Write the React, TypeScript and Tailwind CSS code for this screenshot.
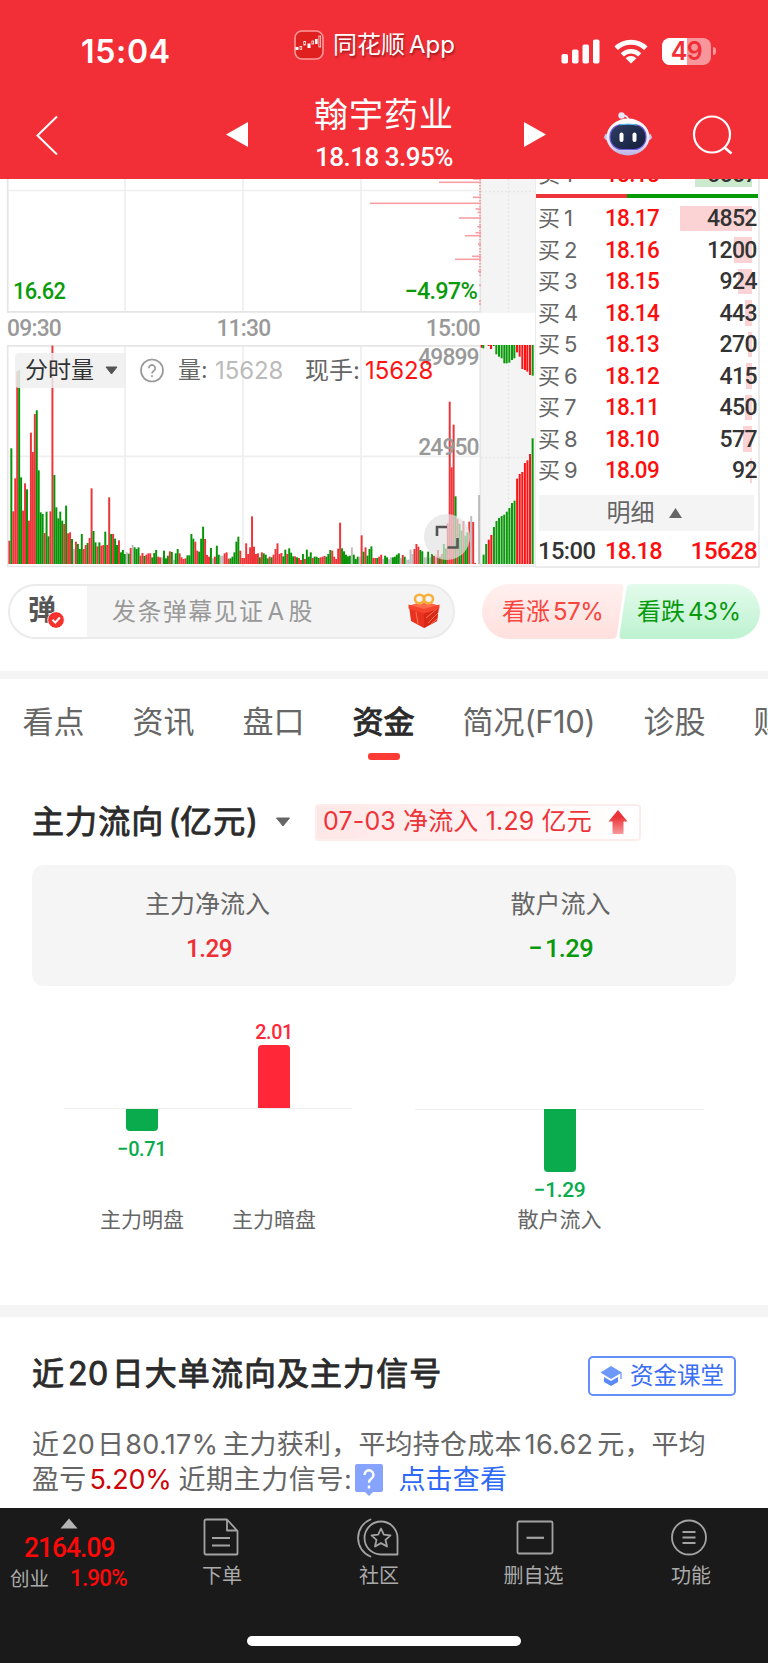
import React from 'react';

const CJK = "font-['Inter','Noto_Sans_CJK_SC',sans-serif]";
const NUM = "font-['Roboto','Noto_Sans_CJK_SC',sans-serif]";

/* One minute of turnover per entry: r = rise, g = fall, n = unchanged. */
const VOLUME =
  'r70 g347 r158 r257 r578 g582 g260 r160 r242 g224 r130 r394 r336 r450 g461 g281 g155 g150 r93 g157 g83 r158 r655 g267 g170 g137 g157 g130 r120 g175 r92 r95 g75 n45 r67 g60 g45 g90 r45 r57 g63 r78 r227 g99 g65 r53 g65 r55 r57 g97 r57 r200 g90 r90 g76 g57 r71 g35 g42 g30 n35 g31 r48 n57 g50 g45 g50 r25 r33 g24 r28 r32 r32 g20 g33 g42 r22 r20 n20 g40 g17 g25 r38 g36 n13 g32 g45 r32 r20 r15 r17 g26 g26 g90 g76 r67 r40 g37 g76 g112 r75 r27 r22 g48 n17 r22 g55 g28 n25 n25 r32 r35 r16 g17 g22 g35 g67 g82 r40 r18 r18 r62 r30 r50 r143 r52 r30 r32 g20 r35 g32 g28 g17 r22 g20 r28 r45 r62 r30 r33 g23 g43 r30 g47 g34 g23 r23 g20 r18 r12 g30 r15 g43 g22 g35 r18 g22 g22 g18 r20 r22 r24 g22 g30 g42 r40 r22 r15 r46 r124 g47 g38 g28 g23 g25 n50 g28 g15 g22 n22 r86 g37 r50 g25 g45 g53 r18 r18 g18 r22 r28 n15 g25 g20 n14 n20 g20 g22 g28 g32 n18 r27 g22 n13 n13 n43 n30 r45 r60 r52 g42 g38 n20 n20 g37 n20 g30 r25 n28 r42 g22 r30 g60 g47 r122 r487 r290 r418 g203 r135 g120 g100 r128 g85 g95 r127 n144 r126 r3 n0 n207'.split(
    ' ',
  );
const AUCTION_TOP = 'r8 g10 r3 r12 g3 g28 g35 g40 g55 g55 g53 g45 g40 r22 r35 r72 r75 r80 r90 g92'.split(' ');
const AUCTION_TOP_X = [635, 640, 656, 663, 671, 679, 687, 695, 703, 710, 718, 726, 733, 741, 749, 757, 765, 772, 780, 788];
const AUCTION_BOTTOM =
  'g28 g60 r73 r87 g111 g129 g138 g144 g148 g157 g168 g183 g190 r256 r270 r276 r303 r311 r330 g377'.split(' ');

const TONE: Record<string, string> = { r: '#ec3439', g: '#069306', n: '#bdbdbd' };
const TONE2: Record<string, string> = { r: '#fb1214', g: '#0a990a' };

const PINK: [number, number][] = [
  [0, 473], [3.3, 439], [18.3, 473], [24.3, 370], [30, 475.5], [33.3, 477.5], [39, 459], [47.7, 477.3], [53.7, 475.5],
  [56.7, 465], [65.3, 478], [77.3, 472], [80.3, 455], [92.3, 478], [106.3, 479], [122, 479], [125, 479],
];

function PricePane() {
  return (
    <div className="relative h-[134px]">
      <svg width="536" height="134" viewBox="0 0 536 134" className="block">
        <rect x="481" y="0" width="54" height="134" fill="#f4f4f4" />
        <path d="M508.500 0V133M481 12.500H534" stroke="#e6e6e6" strokeWidth="1.500" strokeDasharray="2 2" fill="none" />
        <path d="M125 0V133M243 0V133M361 0V133M8 11.500H480" stroke="#efefef" strokeWidth="1.700" fill="none" />
        <path d="M7.700 0V133M480.300 0V133M7 132.800H481" stroke="#e4e4e4" strokeWidth="1.700" fill="none" />
        <path d="M480 0V97" stroke="#f7a3a5" strokeWidth="2" strokeDasharray="1.600 1.400" />
        {PINK.map(([y, x]) => (
          <rect key={y} x={x} y={y - 0.8} width={481 - x} height="1.600" fill="#f7a0a3" />
        ))}
      </svg>
      <div className={`absolute top-[98px] left-0 flex h-[29px] w-[477px] justify-between pl-[13px] text-[24px] leading-[29px] font-medium tracking-[-0.8px] text-[#0a9b0a] ${NUM}`}>
        <span className="inline-block origin-left scale-x-[0.91]">16.62</span>
        <span className="inline-block origin-right scale-x-[0.98]">−4.97%</span>
      </div>
    </div>
  );
}

function VolumePane() {
  return (
    <div className="relative h-[223px]">
      <svg width="536" height="223" viewBox="0 0 536 223" className="block">
        <rect x="481" y="0" width="54" height="222" fill="#f4f4f4" />
        <path d="M508.500 0V222M481 112.500H534" stroke="#e6e6e6" strokeWidth="1.500" strokeDasharray="2 2" fill="none" />
        <path d="M125 0V222M243 0V222M361 0V222M8 111.300H480" stroke="#efefef" strokeWidth="1.700" fill="none" />
        <path d="M7.700 0V222M480.300 0V222M7 0.800H481M7 221.500H536" stroke="#e6e6e6" strokeWidth="1.700" fill="none" />
        {VOLUME.map((v, i) => {
          const h = Number(v.slice(1)) / 3;
          return <rect key={i} x={8.4 + i * 1.957} y={219 - h} width="1.957" height={h} fill={TONE[v[0]]} />;
        })}
        {AUCTION_TOP.map((v, i) => (
          <rect key={i} x={270 + AUCTION_TOP_X[i] / 3 - 1} y="0" width="2" height={Number(v.slice(1)) / 3} fill={TONE2[v[0]]} />
        ))}
        {AUCTION_BOTTOM.map((v, i) => (
          <rect key={i} x={482.6 + i * 2.58} y={219 - Number(v.slice(1)) / 3} width="2" height={Number(v.slice(1)) / 3} fill={TONE2[v[0]]} />
        ))}
      </svg>
      <div className={`absolute top-[-2px] right-[56px] flex origin-right scale-x-[0.95] flex-col gap-[61px] text-right text-[24px] leading-[29px] font-medium tracking-[-0.9px] text-[#999] ${NUM}`}>
        <span>49899</span>
        <span>24950</span>
      </div>
      <div className={`absolute top-[8px] left-[15px] flex h-[35px] items-center text-[23px] leading-[35px] ${CJK}`}>
        <div className="flex h-[35px] w-[111px] items-center rounded bg-[#eeeeee]/85 pl-[10px] text-[#333]">
          <span className="w-[80px]">分时量</span>
          <svg width="14" height="9" viewBox="0 0 14 9"><path d="M1 1H12L6.500 8Z" fill="#555" stroke="#555" strokeLinejoin="round" /></svg>
        </div>
        <svg width="26" height="26" viewBox="0 0 26 26" fill="none" stroke="#999" strokeWidth="1.700" className="ml-[13px]">
          <circle cx="13" cy="12.500" r="11" />
          <path d="M9.800 10.200a3.200 3.200 0 1 1 4.900 2.700c-1.100.8-1.700 1.200-1.700 2.700" />
          <path d="M13 17.200v1.900" />
        </svg>
        <span className="ml-[13px] w-[37px] text-[#666]">量:</span>
        <span className="w-[90px] text-[24px] tracking-[-0.1px] text-[#bbb]">15628</span>
        <span className="w-[60px] text-[24px] text-[#666]">现手:</span>
        <span className="text-[24px] tracking-[-0.1px] text-[#ff1414]">15628</span>
      </div>
      <div className="absolute top-[169px] left-[424px] flex size-[46px] items-center justify-center rounded-full bg-[#e2e2e2]/70">
        <svg width="24" height="24" viewBox="0 0 24 24" fill="none" stroke="#555" strokeWidth="2.600">
          <path d="M2 11V2H12M12.500 22.500H22.500V13" />
        </svg>
      </div>
    </div>
  );
}

const BIDS: [string, string, string, number][] = [
  ['1', '18.17', '4852', 72],
  ['2', '18.16', '1200', 18],
  ['3', '18.15', '924', 14],
  ['4', '18.14', '443', 7],
  ['5', '18.13', '270', 4],
  ['6', '18.12', '415', 6],
  ['7', '18.11', '450', 7],
  ['8', '18.10', '577', 9],
  ['9', '18.09', '92', 2],
];

function BookRow({ side, level, price, qty, bar, tint }: { side: string; level: string; price: string; qty: string; bar: number; tint: string }) {
  return (
    <div className={`relative flex h-[31.500px] shrink-0 items-center pr-[1px] pl-[2px] text-[24px] leading-[31px] font-medium tracking-[-0.7px] ${NUM}`}>
      <div className={`absolute top-[2.500px] right-[6px] h-[25.500px] ${tint}`} style={{ width: bar }} />
      <span className={`relative w-[67px] text-[22px] font-normal tracking-normal whitespace-pre text-[#666] ${CJK}`}>
        {side}
        <span className="pl-[4px]">{level}</span>
      </span>
      <span className="relative flex-1 text-[#fe0d0d]"><span className="inline-block origin-left scale-x-[0.935]">{price}</span></span>
      <span className="relative origin-right scale-x-[0.96] text-[#333]">{qty}</span>
    </div>
  );
}

function OrderBook() {
  return (
    <div className="flex h-[389px] w-[225px] flex-col overflow-hidden border-r-2 border-b-2 border-l border-[#ebebeb]">
      <div className="flex h-[15px] shrink-0 flex-col justify-end overflow-hidden pb-[4px]">
        <BookRow side="卖" level="1" price="18.18" qty="5557" bar={57} tint="bg-[#cbe9cc]" />
      </div>
      <div className="flex h-[4px] shrink-0">
        <div className="w-[91px] bg-[#ec3439]" />
        <div className="flex-1 bg-[#069b06]" />
      </div>
      <div className="mt-[5px]">
        {BIDS.map(([l, p, q, b]) => (
          <BookRow key={l} side="买" level={l} price={p} qty={q} bar={b} tint="bg-[#fbd3d5]" />
        ))}
      </div>
      <div className={`mt-[8px] mr-[4px] ml-[3px] flex h-[36px] shrink-0 items-center justify-center gap-[13px] bg-[#f4f4f4] pr-[4px] text-[24px] leading-[36px] text-[#666] ${CJK}`}>
        <span>明细</span>
        <svg width="15" height="12" viewBox="0 0 15 12"><path d="M7.500 1L14 11H1Z" fill="#666" /></svg>
      </div>
      <div className={`mt-[4px] flex h-[31px] items-center pr-[1px] pl-[2px] text-[24.500px] leading-[31px] font-medium tracking-[-0.6px] text-[#fe0d0d] ${NUM}`}>
        <span className="w-[67px] text-[#333]"><span className="inline-block origin-left scale-x-[0.97]">15:00</span></span>
        <span className="flex-1"><span className="inline-block origin-left scale-x-[0.96]">18.18</span></span>
        <span>15628</span>
      </div>
    </div>
  );
}

function Header() {
  return (
    <header className={`flex h-[179px] shrink-0 flex-col bg-[#f22f37] text-white ${CJK}`}>
      <div className="flex h-[84px] pl-[81px]">
        <span className="mt-[32px] w-[213px] text-[32px] leading-[40px] font-semibold tracking-[0.7px]">15:04</span>
        <svg width="30" height="30" viewBox="0 0 30 30" fill="none" className="mt-[29.500px]">
          <rect x="1" y="1" width="28" height="28" rx="7" fill="#e0201f" stroke="#ff9a9c" strokeWidth="1.600" />
          <g fill="#fff"><rect x="1.500" y="17" width="3" height="3" /><rect x="13.500" y="13.500" width="3" height="4.500" /><rect x="21" y="9" width="2.600" height="5" /></g>
          <g stroke="#fff" strokeWidth="0.700"><rect x="6" y="16.500" width="1.800" height="3" /><rect x="9.800" y="11.500" width="1.800" height="3.500" /><rect x="17.900" y="11" width="1.800" height="3" /><rect x="24.900" y="6" width="1.800" height="11" /></g>
        </svg>
        <span className="mt-[27px] ml-[9px] w-[228px] text-[24px] leading-[36px] [text-shadow:1px_2px_2px_rgba(60,0,0,0.45)]">
          同花顺<span className="pl-[4px]">App</span>
        </span>
        <svg width="40" height="25" viewBox="0 0 40 25" fill="#fff" className="mt-[38.500px]">
          <rect x="0.500" y="15" width="6.500" height="9.500" rx="1.800" /><rect x="11" y="10.500" width="6.500" height="14" rx="1.800" /><rect x="21.500" y="5.500" width="6.500" height="19" rx="1.800" /><rect x="32" y="0.500" width="6.500" height="24" rx="1.800" />
        </svg>
        <svg width="34" height="25" viewBox="0 0 34 25" className="mt-[38.500px] ml-[13px]">
          <g fill="none" stroke="#fff" strokeWidth="5"><path d="M2.200 9.300a21 21 0 0 1 29.600 0" /><path d="M8.300 15.800a12.400 12.400 0 0 1 17.400 0" strokeWidth="4.600" /></g>
          <path d="M17 24.500L11.600 19.200a7.600 7.600 0 0 1 10.800 0Z" fill="#fff" />
        </svg>
        <div className="relative mt-[37.500px] ml-[14px] flex h-[27px] w-[49px] items-center justify-center rounded-[8px] bg-[#f8979b]">
          <div className="absolute inset-y-0 left-0 w-[24.500px] rounded-l-[8px] bg-white" />
          <span className="relative text-[25px] leading-[27px] font-semibold tracking-[-0.5px] text-[#f22f37]">49</span>
        </div>
        <div className="mt-[47px] ml-[2px] h-[8px] w-[3px] rounded-r-full bg-[#f8979b]" />
      </div>
      <div className="flex h-[95px] pl-[35px]">
        <svg width="24" height="40" viewBox="0 0 24 40" fill="none" stroke="#fff" strokeWidth="2" className="mt-[31px]"><path d="M22 1.500L2.500 20.500L22 39.500" /></svg>
        <svg width="24" height="27" viewBox="0 0 24 27" fill="#fff" className="mt-[37px] ml-[166px]"><path d="M1 13.500L23 1V26Z" /></svg>
        <div className="flex w-[274px] flex-col items-center pt-[7px] pr-[4px]">
          <span className="text-[34px] leading-[48px] tracking-[1px]">翰宇药业</span>
          <span className={`mt-[2px] text-[26px] leading-[32px] font-medium tracking-[-0.5px] ${NUM}`}>18.18 3.95%</span>
        </div>
        <svg width="24" height="27" viewBox="0 0 24 27" fill="#fff" className="mt-[37px]"><path d="M1 1L23 13.500L1 26Z" /></svg>
        <svg width="50" height="46" viewBox="0 0 50 46" className="mt-[27px] ml-[56px]">
          <defs>
            <linearGradient id="shell" x1="0" y1="0" x2="0" y2="1"><stop offset="0" stopColor="#fff" /><stop offset="0.650" stopColor="#e6e3f6" /><stop offset="1" stopColor="#b9b2e4" /></linearGradient>
            <linearGradient id="visor" x1="0" y1="0" x2="1" y2="1"><stop offset="0" stopColor="#2e3f63" /><stop offset="1" stopColor="#141d3c" /></linearGradient>
          </defs>
          <path d="M18 4.500q7-1 8 6" fill="none" stroke="#e8e4f5" strokeWidth="1.800" />
          <circle cx="18.500" cy="4.500" r="3.200" fill="#e9e6f7" />
          <ellipse cx="25" cy="26" rx="24" ry="7.500" fill="#c9c4ec" />
          <ellipse cx="25" cy="26" rx="21.500" ry="18.500" fill="url(#shell)" />
          <rect x="7" y="13.500" width="36" height="25" rx="12" fill="url(#visor)" stroke="#6f5be0" strokeWidth="1.200" />
          <path d="M17 13.800q8-1.600 17 .2" fill="none" stroke="#45c9e8" strokeWidth="1" />
          <g fill="#fff"><rect x="16.500" y="21.500" width="4" height="9.500" rx="2" /><rect x="29.500" y="21.500" width="4" height="9.500" rx="2" /></g>
        </svg>
        <svg width="42" height="42" viewBox="0 0 42 42" fill="none" stroke="#fff" strokeWidth="2.200" className="mt-[30px] ml-[39px]"><circle cx="20" cy="20.500" r="18" /><path d="M32.500 33.500L39.500 39.500" strokeWidth="2.600" /></svg>
      </div>
    </header>
  );
}

function Barrage() {
  return (
    <div className={`flex h-[103px] shrink-0 pt-[16px] pl-[8px] ${CJK}`}>
      <div className="flex h-[55px] w-[447px] items-center overflow-hidden rounded-full border-2 border-[#ebebeb] bg-[#f4f4f4] text-[#999]">
        <div className="relative h-full w-[77px] bg-white">
          <span className="absolute top-[4px] left-[18px] text-[28px] leading-[40px] font-bold text-[#555]">弹</span>
          <svg width="18" height="18" viewBox="0 0 18 18" className="absolute top-[25px] left-[36.500px]"><circle cx="9" cy="9" r="8.300" fill="#f6322e" stroke="#fff" strokeWidth="0.800" /><path d="M5.500 8.800L8.300 11.600L12.800 6.500" fill="none" stroke="#fff" strokeWidth="2" /></svg>
        </div>
        <span className="ml-[25px] w-[296px] text-[24px] leading-[36px] tracking-[1.400px]">发条弹幕见证<span className="px-[3px]">A</span>股</span>
        <svg width="32" height="36" viewBox="0 0 32 36" className="mb-[1px]">
          <path d="M1 13L16 8L31 13L29 28L16 35L3 28Z" fill="#e8321f" />
          <path d="M1 13L16 8L31 13L16 18Z" fill="#ff6a4c" />
          <path d="M16 18L31 13L29 28L16 35Z" fill="#d92718" />
          <path d="M8 19L10 31M20 30L30 20M18 25L30 15M22 32L29 26" stroke="#ff7a55" strokeWidth="1" />
          <path d="M0.500 11.500L16 16L31.500 11.500V15.500L16 20.500L0.500 15.500Z" fill="#f5452e" />
          <g fill="none" stroke="#f5b13c" strokeWidth="2.600"><ellipse cx="11.500" cy="6" rx="4.500" ry="4.300" /><ellipse cx="20.500" cy="6" rx="4.500" ry="4.300" /></g>
        </svg>
      </div>
      <div className="relative ml-[27px] flex h-[55px] w-[278px] text-[24px] leading-[55px]">
        <svg width="278" height="55" viewBox="0 0 278 55" className="absolute inset-0">
          <defs>
            <linearGradient id="up" x1="0" y1="0" x2="0" y2="1"><stop offset="0" stopColor="#fff0ef" /><stop offset="1" stopColor="#fee0dd" /></linearGradient>
            <linearGradient id="down" x1="0" y1="0" x2="0" y2="1"><stop offset="0" stopColor="#e3fbec" /><stop offset="1" stopColor="#bdf2d0" /></linearGradient>
          </defs>
          <path d="M27.500 0H138Q142 0 141.500 4L135 51Q134 55 130 55H27.500A27.500 27.500 0 0 1 27.500 0Z" fill="url(#up)" />
          <path d="M150 0H250.500A27.500 27.500 0 0 1 250.500 55H141Q137 55 137.500 51L144.500 4Q145.500 0 150 0Z" fill="url(#down)" />
        </svg>
        <span className="relative ml-[20px] w-[135px] text-[#f8453d]">看涨<span className="pl-[3px] tracking-[-0.400px]">57%</span></span>
        <span className="relative text-[#08990d]">看跌<span className="pl-[3px] tracking-[-0.400px]">43%</span></span>
      </div>
    </div>
  );
}

function Tabs() {
  return (
    <nav className={`flex h-[82px] shrink-0 overflow-hidden pl-[22.500px] text-[31px] leading-[44px] whitespace-nowrap text-[#666] ${CJK}`}>
      <span className="mt-[21px] w-[110px] shrink-0">看点</span>
      <span className="mt-[21px] w-[110px] shrink-0">资讯</span>
      <span className="mt-[21px] w-[110px] shrink-0">盘口</span>
      <div className="mt-[21px] flex w-[110px] shrink-0 flex-col text-[#2b2b2b] [-webkit-text-stroke:1px_#2b2b2b]">
        <span>资金</span>
        <div className="mt-[9px] ml-[15px] h-[7px] w-[32px] rounded-[3px] bg-[#fd3a33]" />
      </div>
      <span className="mt-[21px] w-[181px] shrink-0">简况<span className="tracking-[-0.500px]">(F10)</span></span>
      <span className="mt-[21px] w-[110px] shrink-0">诊股</span>
      <span className="mt-[21px] shrink-0">财</span>
    </nav>
  );
}

function Flow() {
  return (
    <section className={`flex h-[544px] shrink-0 flex-col px-[32px] ${CJK}`}>
      <div className="mt-[37px] flex h-[48px] items-center whitespace-nowrap">
        <span className="w-[243px] text-[32px] leading-[48px] tracking-[1.100px] text-[#2b2b2b] [-webkit-text-stroke:0.9px_#2b2b2b]">主力流向<span className="pl-[4px] tracking-normal">(</span>亿元<span className="tracking-normal">)</span></span>
        <svg width="16" height="10" viewBox="0 0 16 10"><path d="M1.500 1H14.500L8 9Z" fill="#666" stroke="#666" strokeLinejoin="round" /></svg>
        <div className="ml-[24px] flex h-[37px] w-[326px] items-center justify-between rounded border-2 border-[#fdecec] bg-linear-to-r from-[#fde6e6] to-white pr-[11px] pl-[6px] text-[25px] leading-[33px] text-[#ee3338]">
          <span className="mt-[-1px] tracking-[0.150px]">07-03 净流入 1.29 亿元</span>
          <svg width="20" height="26" viewBox="0 0 20 26"><defs><linearGradient id="arrow" x1="0" y1="0" x2="0" y2="1"><stop offset="0.300" stopColor="#ec3338" /><stop offset="1" stopColor="#f79a9c" /></linearGradient></defs><path d="M10 1L19.500 12.500H15.500V24Q15.500 25 14.500 25H5.500Q4.500 25 4.500 24V12.500H0.500Z" fill="url(#arrow)" /></svg>
        </div>
      </div>
      <div className="mt-[19px] flex h-[121px] shrink-0 rounded-xl bg-[#f5f5f5] pt-[20px] text-[25px] leading-[38px] text-[#666]">
        <div className="flex flex-1 flex-col items-center pr-[2px]">
          <span>主力净流入</span>
          <span className={`mt-[6px] ml-[3px] origin-center scale-x-[0.92] text-[26.500px] font-medium tracking-[-0.600px] text-[#ee3035] ${NUM}`}>1.29</span>
        </div>
        <div className="flex flex-1 flex-col items-center">
          <span>散户流入</span>
          <span className={`mt-[6px] scale-x-[0.96] text-[26.500px] font-medium tracking-[-0.600px] text-[#08990d] ${NUM}`}><span className="pr-[3px]">−</span>1.29</span>
        </div>
      </div>
      <div className="mt-[29px] flex h-[230px] shrink-0 text-[21px] leading-[30px] text-[#666]">
        <div className="ml-[32px] flex h-[94px] w-[288px] border-b border-[#eeeeee]">
          <div className="flex w-[156px] flex-col items-center pt-[94px]">
            <div className="h-[22px] w-[32px] shrink-0 rounded-b bg-[#09ab4c]" />
            <span className={`mt-[3px] scale-x-[0.95] font-medium tracking-[-0.400px] text-[#09ab4c] ${NUM}`}>−0.71</span>
            <span className="mt-[41px]">主力明盘</span>
          </div>
          <div className="flex w-[108px] flex-col items-center">
            <span className={`mt-[2px] h-[28px] scale-x-[0.94] font-medium tracking-[-0.400px] text-[#ff2738] ${NUM}`}>2.01</span>
            <div className="h-[63px] w-[32px] shrink-0 rounded-t bg-[#ff2738]" />
            <span className="mt-[97px]">主力暗盘</span>
          </div>
        </div>
        <div className="ml-[63px] flex h-[94px] w-[289px] flex-col items-center border-b border-[#eeeeee] pt-[94px]">
          <div className="h-[63px] w-[32px] shrink-0 rounded-b bg-[#09ab4c]" />
          <span className={`mt-[3px] font-medium tracking-[-0.400px] text-[#09ab4c] ${NUM}`}>−1.29</span>
          <span>散户流入</span>
        </div>
      </div>
    </section>
  );
}

function Signals() {
  return (
    <section className={`flex h-[191px] shrink-0 flex-col px-[32px] whitespace-nowrap ${CJK}`}>
      <div className="mt-[33px] flex h-[48px] items-center justify-between">
        <h2 className="text-[32px] leading-[48px] tracking-[1.050px] text-[#2b2b2b] [-webkit-text-stroke:0.9px_#2b2b2b]">近<span className="px-[3px] tracking-[0.500px]">20</span>日大单流向及主力信号</h2>
        <div className="mt-[4px] flex h-[40px] w-[148px] items-center rounded-[5px] border-2 border-[#6490fa] pl-[10px] text-[23.500px] leading-[36px] text-[#3a6ff5]">
          <svg width="23" height="22" viewBox="0 0 23 22" className="mr-[7px]"><path d="M11 1L22 7.500L11 14L0.500 7.500Z" fill="#6f98fb" /><path d="M4 12L11 16L18 12V17L11 21L4 17Z" fill="#5b8af9" /><path d="M21 8V14" stroke="#6f98fb" strokeWidth="1.300" /></svg>
          资金课堂
        </div>
      </div>
      <div className="mt-[29px] text-[27px] leading-[35px] tracking-[0.200px] text-[#666]">
        <div className="h-[35px]">近<span className="px-[2px]">20</span>日<span className="pr-[4px] pl-[1px] tracking-[0.300px]">80.17%</span>主力获利，平均持仓成本<span className="pr-[4px] pl-[3px] tracking-[0.300px]">16.62</span>元，平均</div>
        <div className="flex h-[35px] items-center">
          盈亏<span className="ml-[3px] w-[89px] tracking-[-0.300px] text-[#cc0508]">5.20%</span><span className="tracking-[0.600px]">近期主力信号:</span>
          <svg width="28" height="32" viewBox="0 0 28 32" className="mr-[15px] ml-[3px]"><path d="M2 0H26Q28 0 28 2V26Q28 28 26 28H18L14 32L10 28H2Q0 28 0 26V2Q0 0 2 0Z" fill="#86a4fd" /><path d="M9.500 11a4.500 4.500 0 1 1 7 3.600c-1.800 1.200-2.500 1.900-2.500 4.200M14 21.500v3" fill="none" stroke="#fff" strokeWidth="2.400" /></svg>
          <span className="text-[#2e69f8]">点击查看</span>
        </div>
      </div>
    </section>
  );
}

function BottomBar() {
  return (
    <footer className={`flex h-[155px] shrink-0 flex-col bg-[#1a1a1a] text-[20px] leading-[30px] text-[#aaa] ${CJK}`}>
      <div className="flex h-[128px] pt-[10px]">
        <div className="flex w-[138px] flex-col items-center">
          <svg width="18" height="11" viewBox="0 0 18 11"><path d="M9 0.500L17.500 10.500H0.500Z" fill="#b5b5b5" /></svg>
          <span className={`mt-[2px] scale-x-[0.96] text-[27.500px] leading-[34px] font-medium tracking-[-1px] text-[#fe0808] ${NUM}`}>2164.09</span>
          <div className="mt-[-1px] flex w-full items-center pl-[10px]">
            <span className="w-[60px] text-[19.500px]">创业</span>
            <span className={`origin-left scale-x-[0.97] text-[23px] font-medium tracking-[-0.800px] text-[#fe0808] ${NUM}`}>1.90%</span>
          </div>
        </div>
        <div className="flex w-[168px] flex-col items-center">
          <svg width="36" height="38" viewBox="0 0 36 38" fill="none" stroke="#a3a3a3" strokeWidth="1.800" strokeLinejoin="round" className="mr-[3px]"><path d="M3 1.500H24L34.500 13V35.500Q34.500 36.500 33.500 36.500H3Q1.500 36.500 1.500 35V3Q1.500 1.500 3 1.500ZM24 1.500V12.500H34.500M9 20H27M9 27.500H27" /></svg>
          <span className="mt-[5px]">下单</span>
        </div>
        <div className="flex w-[146px] flex-col items-center">
          <svg width="42" height="40" viewBox="0 0 42 40" fill="none" stroke="#a3a3a3" strokeWidth="1.800" strokeLinejoin="round" className="mr-[2px]"><path d="M24 3.500A16.500 16.500 0 0 0 24 36.500H40.500V20A16.500 16.500 0 0 0 24 3.500Z" /><path d="M13.500 1.500A20 20 0 0 0 13.500 38.500" strokeLinecap="round" /><path d="M24 10.500L26.800 16.700L33.500 17.400L28.500 21.900L30 28.500L24 25.100L18 28.500L19.500 21.900L14.500 17.400L21.200 16.700Z" /></svg>
          <span className="mt-[3px]">社区</span>
        </div>
        <div className="flex w-[163px] flex-col items-center">
          <svg width="38" height="38" viewBox="0 0 38 38" fill="none" stroke="#a3a3a3" strokeWidth="1.800" className="ml-[3px]"><rect x="1.500" y="3.500" width="35" height="32" rx="1.500" /><path d="M10.500 19.800H28" strokeWidth="2.200" /></svg>
          <span className="mt-[5px]">删自选</span>
        </div>
        <div className="flex w-[152px] flex-col items-center">
          <svg width="38" height="38" viewBox="0 0 38 38" fill="none" stroke="#a3a3a3" strokeWidth="1.800" className="mr-[4px]"><circle cx="19" cy="19.500" r="17" /><path d="M12.500 14H25.500M12.500 19.500H25.500M12.500 25H25.500" /></svg>
          <span className="mt-[5px]">功能</span>
        </div>
      </div>
      <div className="mx-auto h-[10px] w-[274px] rounded-full bg-white" />
    </footer>
  );
}

export default function App() {
  return (
    <div className="flex h-[1663px] w-[768px] flex-col overflow-hidden bg-white">
      <Header />
      <div className="flex h-[389px] shrink-0">
        <div className="w-[535px]">
          <PricePane />
          <div className={`flex h-[32px] w-[480px] justify-between pl-[7px] text-[24px] leading-[31px] font-medium tracking-[-0.800px] text-[#999] ${NUM}`}>
            <span className="origin-left scale-x-[0.95]">09:30</span>
            <span className="scale-x-[0.95]">11:30</span>
            <span className="origin-right scale-x-[0.95]">15:00</span>
          </div>
          <VolumePane />
        </div>
        <OrderBook />
      </div>
      <Barrage />
      <div className="h-[8px] shrink-0 bg-[#f4f4f4]" />
      <Tabs />
      <Flow />
      <div className="h-[12px] shrink-0 bg-[#f4f4f4]" />
      <Signals />
      <BottomBar />
    </div>
  );
}
